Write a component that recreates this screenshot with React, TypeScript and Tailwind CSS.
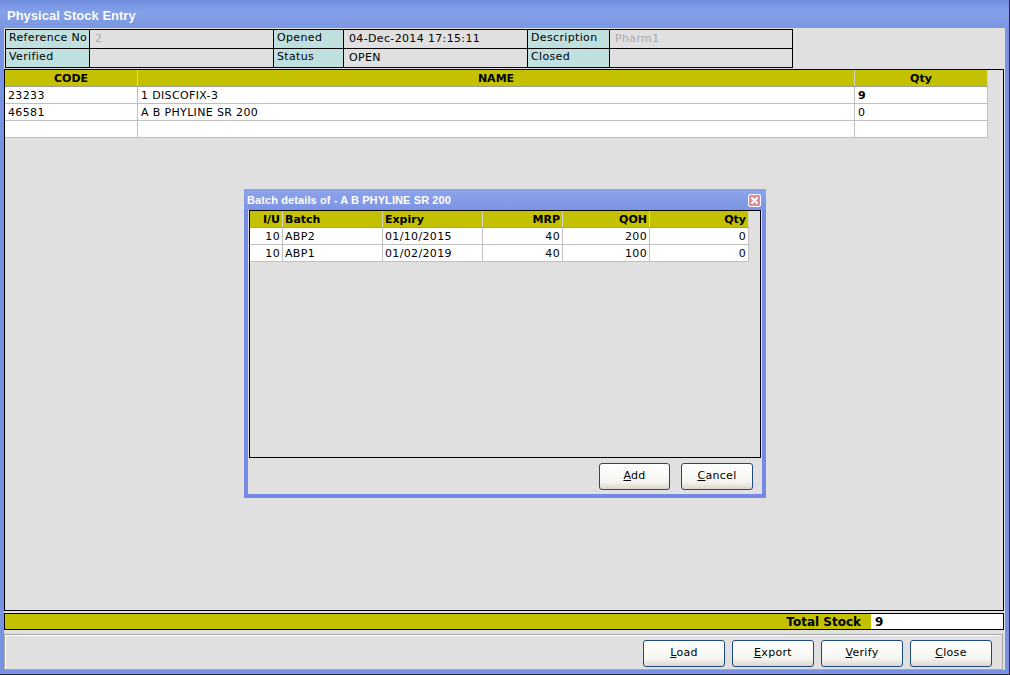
import React from "react";

const infoRows = [
  [
    { label: "Reference No", value: "2", dim: true },
    { label: "Opened", value: "04-Dec-2014 17:15:11" },
    { label: "Description", value: "Pharm1", dim: true },
  ],
  [
    { label: "Verified", value: "" },
    { label: "Status", value: "OPEN" },
    { label: "Closed", value: "" },
  ],
];

const items = [
  { code: "23233", name: "1 DISCOFIX-3", qty: "9", bold: true },
  { code: "46581", name: "A B PHYLINE SR 200", qty: "0" },
  { code: "", name: "", qty: "" },
];

const batches = [
  { iu: "10", batch: "ABP2", expiry: "01/10/2015", mrp: "40", qoh: "200", qty: "0" },
  { iu: "10", batch: "ABP1", expiry: "01/02/2019", mrp: "40", qoh: "100", qty: "0" },
];

function XpButton({ label, w }: { label: string; w: string }) {
  return (
    <button
      className={`${w} h-[27px] rounded-[3px] border border-[#1c4a80] bg-[linear-gradient(#ffffff,#f5f5f1_70%,#dcd8cc)] text-[11px] tracking-[0.3px] text-black`}
    >
      <u>{label[0]}</u>
      {label.slice(1)}
    </button>
  );
}

function BatchDialog() {
  return (
    <div className="absolute left-[244px] top-[189px] w-[522px] h-[309px] bg-[#7689e4] flex flex-col">
      {/* title */}
      <div className="h-[21px] flex items-center justify-between pl-[3px] pr-[5px] pt-[2px] bg-[linear-gradient(#8ea4ea,#7c94e4)]">
        <span className="font-['Liberation_Sans'] font-bold text-[11px] tracking-[0.1px] text-white">
          Batch details of - A B PHYLINE SR 200
        </span>
        <span className="w-[13px] h-[13px] rounded-[2px] border border-white bg-[#d890a6] grid place-items-center">
          <svg width="9" height="9" viewBox="0 0 9 9">
            <path d="M1.5 1.5 L7.5 7.5 M7.5 1.5 L1.5 7.5" stroke="white" strokeWidth="1.8" />
          </svg>
        </span>
      </div>
      <div className="flex-1 mx-[4px] mb-[4px] bg-[#e0e0e0] flex flex-col">
        <div className="mx-[1px] h-[248px] border border-black">
          <div className="w-[499px] flex h-[17px] bg-[#c4c100] border-b border-[#a0a090] font-bold text-[11px] leading-[17px]">
            <div className="w-[33px] border-r border-[#d8d8c0] text-right pr-[2px]">I/U</div>
            <div className="w-[100px] border-r border-[#d8d8c0] pl-[2px]">Batch</div>
            <div className="w-[100px] border-r border-[#d8d8c0] pl-[2px]">Expiry</div>
            <div className="w-[80px] border-r border-[#d8d8c0] text-right pr-[2px]">MRP</div>
            <div className="w-[87px] border-r border-[#d8d8c0] text-right pr-[2px]">QOH</div>
            <div className="w-[99px] border-r border-[#d8d8c0] text-right pr-[2px]">Qty</div>
          </div>
          {batches.map((b) => (
            <div key={b.batch} className="w-[499px] flex h-[17px] bg-white text-[11px] tracking-[0.35px] leading-[17px]">
              <div className="w-[33px] border-r border-b border-[#c0c0c0] text-right pr-[2px]">{b.iu}</div>
              <div className="w-[100px] border-r border-b border-[#c0c0c0] pl-[2px]">{b.batch}</div>
              <div className="w-[100px] border-r border-b border-[#c0c0c0] pl-[2px]">{b.expiry}</div>
              <div className="w-[80px] border-r border-b border-[#c0c0c0] text-right pr-[2px]">{b.mrp}</div>
              <div className="w-[87px] border-r border-b border-[#c0c0c0] text-right pr-[2px]">{b.qoh}</div>
              <div className="w-[99px] border-r border-b border-[#c0c0c0] text-right pr-[2px]">{b.qty}</div>
            </div>
          ))}
        </div>
        <div className="flex justify-end gap-[11px] pt-[5px] pr-[9px]">
          <XpButton label="Add" w="w-[71px]" />
          <XpButton label="Cancel" w="w-[72px]" />
        </div>
      </div>
    </div>
  );
}

export default function App() {
  return (
    <div className="relative w-[1010px] h-[675px] bg-[#2a2a3a] font-['DejaVu_Sans',sans-serif] text-black overflow-hidden">
      <div className="w-[1009px] h-[674px] bg-[#7893e2] flex flex-col">
        {/* title bar */}
        <div className="h-[28px] shrink-0 flex items-center pl-[7px] pt-[3px] bg-[linear-gradient(#6d8bdc,#83a0e8_40%,#7a97e2)]">
          <span className="font-['Liberation_Sans'] font-bold text-[13px] text-white [text-shadow:0_0_1px_#6b86d0]">
            Physical Stock Entry
          </span>
        </div>

        <div className="ml-[4px] mr-[4px] h-[642px] bg-[#e0e0e0] flex flex-col">
          {/* info table */}
          <div className="mt-[1px] ml-[1px] w-[788px] grid grid-cols-[83px_183px_69px_183px_81px_182px] gap-px bg-black p-px text-[11px] tracking-[0.35px]">
            {infoRows.flatMap((row, ri) =>
              row.flatMap((c, ci) => [
                <div key={`l${ri}${ci}`} className="h-[18px] bg-[#c0e0e0] pl-[3px] leading-[16px]">
                  {c.label}
                </div>,
                <div
                  key={`v${ri}${ci}`}
                  className={`h-[18px] bg-[#e0e0e0] pl-[5px] leading-[18px] ${c.dim ? "text-[#a8a8a8]" : ""}`}
                >
                  {c.value}
                </div>,
              ])
            )}
          </div>

          {/* items grid */}
          <div className="mt-[1px] w-[1000px] h-[542px] border border-black">
            <div className="w-[983px] flex h-[17px] bg-[#c4c100] border-b border-[#a0a090] font-bold text-[11px] leading-[17px]">
              <div className="w-[133px] border-r border-[#d8d8c0] text-center">CODE</div>
              <div className="w-[717px] border-r border-[#d8d8c0] text-center">NAME</div>
              <div className="w-[133px] border-r border-[#d8d8c0] text-center">Qty</div>
            </div>
            {items.map((it, i) => (
              <div key={i} className="w-[983px] flex h-[17px] bg-white text-[11px] tracking-[0.35px] leading-[17px]">
                <div className="w-[133px] border-r border-b border-[#c0c0c0] pl-[3px]">{it.code}</div>
                <div className="w-[717px] border-r border-b border-[#c0c0c0] pl-[3px]">{it.name}</div>
                <div className={`w-[133px] border-r border-b border-[#c0c0c0] pl-[3px] ${it.bold ? "font-bold" : ""}`}>
                  {it.qty}
                </div>
              </div>
            ))}
          </div>

          {/* total stock */}
          <div className="mt-[2px] w-[1000px] h-[17px] border border-black flex text-[12px] font-bold leading-[16px]">
            <div className="flex-1 bg-[#c4c100] text-right pr-[10px]">Total Stock</div>
            <div className="w-[132px] bg-white pl-[4px]">9</div>
          </div>

          {/* button panel */}
          <div className="mt-[4px] w-[999px] h-[36px] border border-[#a6a6a6]">
            <div className="h-full border-t border-l border-white flex items-start justify-end gap-[7px] pt-[4px] pr-[10px]">
              <XpButton label="Load" w="w-[82px]" />
              <XpButton label="Export" w="w-[82px]" />
              <XpButton label="Verify" w="w-[82px]" />
              <XpButton label="Close" w="w-[82px]" />
            </div>
          </div>
        </div>
      </div>

      <BatchDialog />
    </div>
  );
}
